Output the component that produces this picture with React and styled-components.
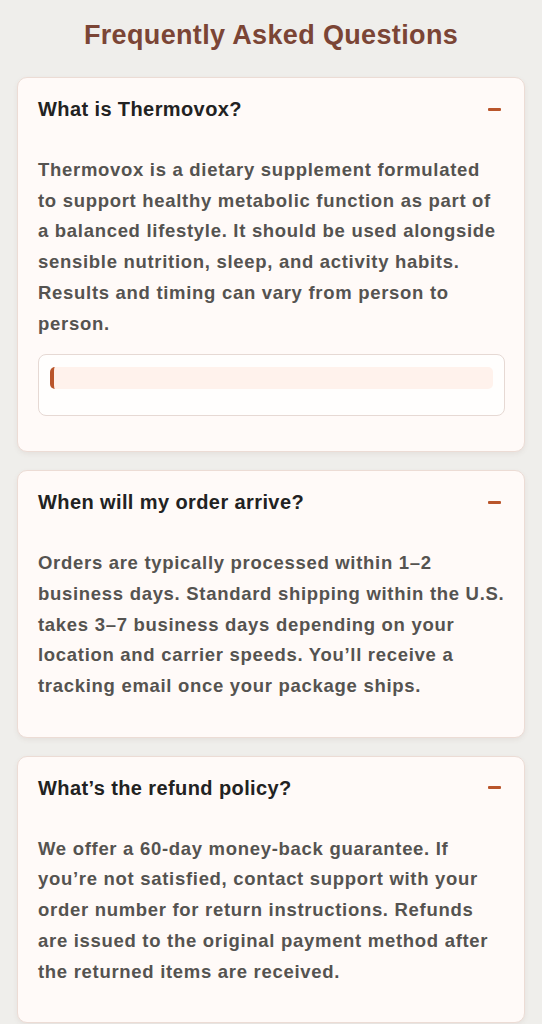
import React from 'react';
import styled, { createGlobalStyle } from 'styled-components';

const GlobalStyle = createGlobalStyle`
  html, body {
    margin: 0;
    padding: 0;
    background: #efeeeb;
  }
  body {
    font-family: "Liberation Sans", Arial, sans-serif;
    -webkit-font-smoothing: antialiased;
  }
`;

const faqs = [
  {
    q: 'What is Thermovox?',
    a: 'Thermovox is a dietary supplement formulated to\u00a0support healthy metabolic function as part of a balanced lifestyle. It should be used alongside sensible nutrition, sleep, and activity habits. Results and timing can vary from person to person.',
    extra: true,
  },
  {
    q: 'When will my order arrive?',
    a: 'Orders are typically processed within 1–2 business days. Standard shipping within the U.S. takes 3–7 business days depending on your location and carrier speeds. You’ll receive a tracking email once your package ships.',
  },
  {
    q: 'What’s the refund policy?',
    a: 'We offer a 60-day money-back guarantee. If you’re not satisfied, contact support with your order number for return instructions. Refunds are issued to the original payment method after the returned items are received.',
  },
];

const Page = () => (
  <Wrapper>
    <Title>Frequently Asked Questions</Title>
    <List>
      {faqs.map((item) => (
        <Card key={item.q}>
          <QuestionRow>
            <Question>{item.q}</Question>
            <Minus />
          </QuestionRow>
          <Answer>
            <p>{item.a}</p>
            {item.extra && (
              <NoteBox>
                <NoteBar />
              </NoteBox>
            )}
          </Answer>
        </Card>
      ))}
    </List>
  </Wrapper>
);

const Wrapper = styled.div`
  padding: 16px 17px 20px;
`;

const Title = styled.h2`
  margin: 0 0 23px;
  text-align: center;
  font-size: 27px;
  line-height: 38px;
  font-weight: 700;
  letter-spacing: 0.35px;
  color: #7b4535;
`;

const List = styled.div`
  display: flex;
  flex-direction: column;
  gap: 18px;
`;

const Card = styled.div`
  background: #fffaf8;
  border: 1px solid #ecdcd5;
  border-radius: 10px;
  box-shadow: 0 2px 5px rgba(120, 80, 60, 0.08);
`;

const QuestionRow = styled.div`
  display: flex;
  align-items: center;
  justify-content: space-between;
  padding: 18px 23px 18px 20px;
`;

const Question = styled.h3`
  margin: 0;
  font-size: 20px;
  line-height: 26px;
  font-weight: 700;
  letter-spacing: 0.4px;
  color: #222;
`;

const Minus = styled.span`
  display: block;
  width: 13px;
  height: 3px;
  background: #b9552b;
  border-radius: 1px;
`;

const Answer = styled.div`
  padding: 15px 17px 35px 20px;

  p {
    margin: 0;
    font-size: 18.5px;
    line-height: 30.7px;
    font-weight: 700;
    letter-spacing: 0.7px;
    color: #555350;
  }
`;

const NoteBox = styled.div`
  margin: 15px 2px 0 0;
  padding: 12px 11px 26px;
  background: #fffefd;
  border: 1px solid #e6d9d4;
  border-radius: 8px;
`;

const NoteBar = styled.div`
  height: 22px;
  background: #fff2ec;
  border-left: 4px solid #b9552b;
  border-radius: 5px;
`;

export default function App() {
  return (
    <>
      <GlobalStyle />
      <Page />
    </>
  );
}
